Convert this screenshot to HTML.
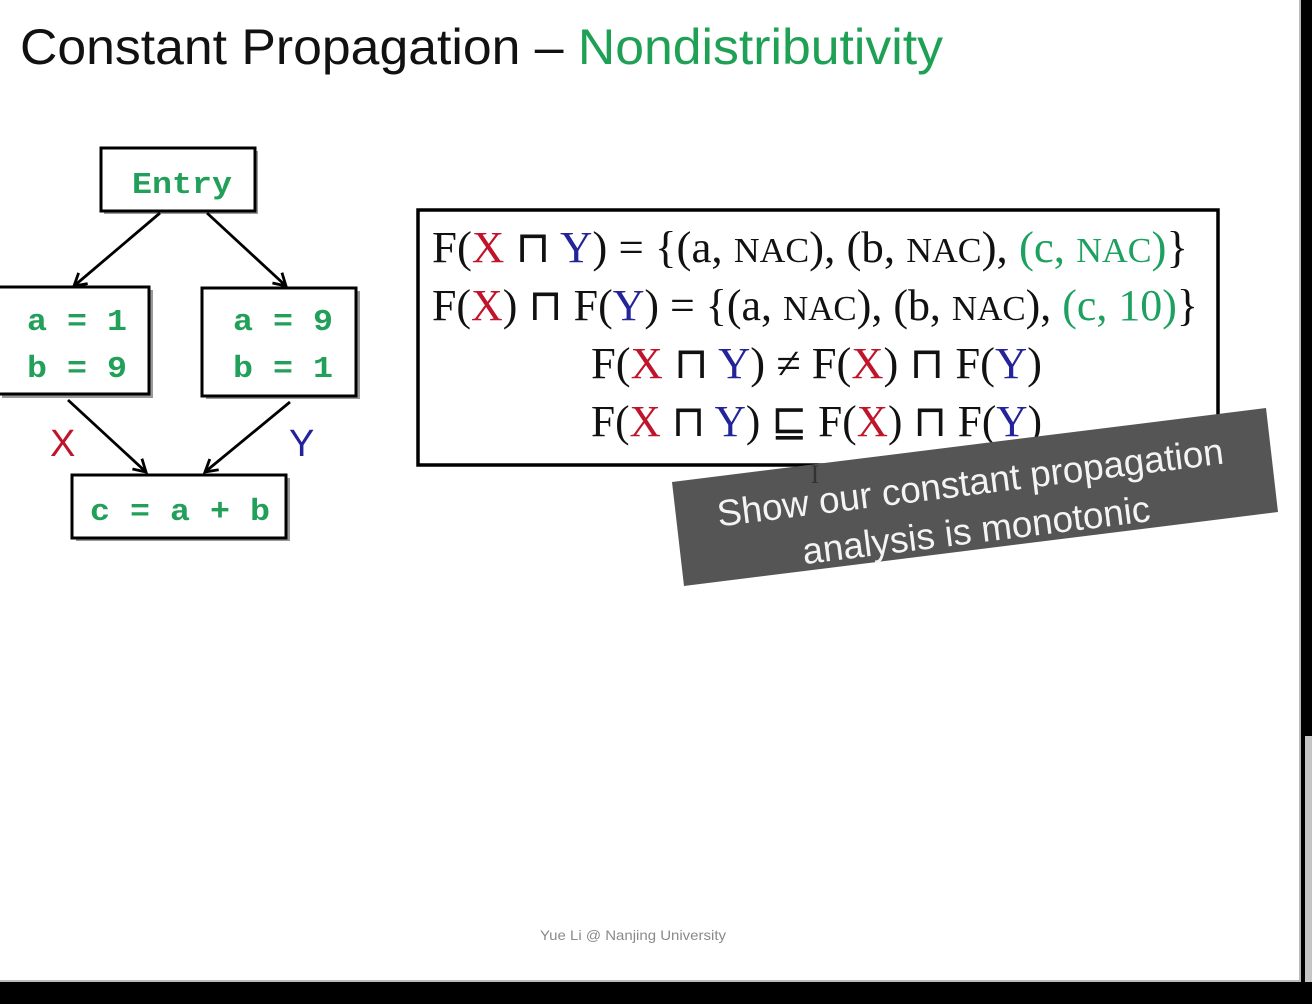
<!DOCTYPE html>
<html><head><meta charset="utf-8"><style>
html,body{margin:0;padding:0;width:1312px;height:1004px;overflow:hidden;background:#000}
svg{display:block}
</style></head><body>
<svg width="1312" height="1004" viewBox="0 0 1312 1004" xmlns="http://www.w3.org/2000/svg">
<defs>
<marker id="ah" markerWidth="18" markerHeight="18" refX="14" refY="9" orient="auto" markerUnits="userSpaceOnUse">
<path d="M2,2 L14,9 L2,16" fill="none" stroke="#000" stroke-width="2.8"/>
</marker>
</defs>
<rect x="0" y="0" width="1301" height="982" fill="#fff"/>
<rect x="1299" y="0" width="2" height="982" fill="#bbb"/>
<rect x="0" y="980" width="1301" height="2" fill="#bbb"/>
<rect x="1305" y="736" width="7" height="246" fill="#c4c4c4"/>

<text x="20" y="64" font-family="Liberation Sans, sans-serif" font-size="50" textLength="923" lengthAdjust="spacingAndGlyphs"><tspan fill="#111">Constant Propagation – </tspan><tspan fill="#1ea055">Nondistributivity</tspan></text>

<g stroke="#000" stroke-width="3" fill="#fff">
<rect x="104" y="151" width="154" height="63" fill="#999" stroke="none"/>
<rect x="101" y="148" width="154" height="63"/>
<rect x="2" y="290" width="151" height="108" fill="#999" stroke="none"/>
<rect x="-2" y="287" width="151" height="107"/>
<rect x="206" y="291" width="154" height="108" fill="#999" stroke="none"/>
<rect x="202" y="288" width="154" height="108"/>
<rect x="76" y="478" width="214" height="63" fill="#999" stroke="none"/>
<rect x="72" y="475" width="214" height="63"/>
</g>
<g stroke="#000" stroke-width="2.8" fill="none" marker-end="url(#ah)">
<line x1="160" y1="213" x2="74" y2="286"/>
<line x1="207" y1="213" x2="286" y2="286"/>
<line x1="68" y1="400" x2="146" y2="472"/>
<line x1="290" y1="402" x2="205" y2="472"/>
</g>
<g font-family="Liberation Mono, monospace" font-weight="bold" font-size="31" fill="#22a05a">
<text x="132" y="193" textLength="100" lengthAdjust="spacingAndGlyphs">Entry</text>
<text x="27" y="330" textLength="100" lengthAdjust="spacingAndGlyphs">a = 1</text>
<text x="27" y="377" textLength="100" lengthAdjust="spacingAndGlyphs">b = 9</text>
<text x="233" y="330" textLength="100" lengthAdjust="spacingAndGlyphs">a = 9</text>
<text x="233" y="377" textLength="100" lengthAdjust="spacingAndGlyphs">b = 1</text>
<text x="90" y="520" textLength="180" lengthAdjust="spacingAndGlyphs">c = a + b</text>
</g>
<text x="50" y="456" font-family="Liberation Sans, sans-serif" font-size="38" fill="#c0142a">X</text>
<text x="289" y="456" font-family="Liberation Sans, sans-serif" font-size="38" fill="#23239a">Y</text>

<rect x="418" y="210" width="800" height="255" fill="#fff" stroke="#000" stroke-width="3.5"/>
<g font-family="Liberation Serif, serif" font-size="44" fill="#111">
<text x="432" y="262" textLength="756" lengthAdjust="spacingAndGlyphs">F(<tspan fill="#c0142a">X</tspan> ⊓ <tspan fill="#23239a">Y</tspan>) = {(a, <tspan font-size="35">NAC</tspan>), (b, <tspan font-size="35">NAC</tspan>), <tspan fill="#1ea060">(c, <tspan font-size="35">NAC</tspan>)</tspan>}</text>
<text x="432" y="320" textLength="766" lengthAdjust="spacingAndGlyphs">F(<tspan fill="#c0142a">X</tspan>) ⊓ F(<tspan fill="#23239a">Y</tspan>) = {(a, <tspan font-size="35">NAC</tspan>), (b, <tspan font-size="35">NAC</tspan>), <tspan fill="#1ea060">(c, 10)</tspan>}</text>
<text x="591" y="378" textLength="451" lengthAdjust="spacingAndGlyphs">F(<tspan fill="#c0142a">X</tspan> ⊓ <tspan fill="#23239a">Y</tspan>) ≠ F(<tspan fill="#c0142a">X</tspan>) ⊓ F(<tspan fill="#23239a">Y</tspan>)</text>
<text x="591" y="436" textLength="451" lengthAdjust="spacingAndGlyphs">F(<tspan fill="#c0142a">X</tspan> ⊓ <tspan fill="#23239a">Y</tspan>) ⊑ F(<tspan fill="#c0142a">X</tspan>) ⊓ F(<tspan fill="#23239a">Y</tspan>)</text>
</g>

<polygon points="672,482 1266,408 1278,512 684,586" fill="#555"/>
<g transform="rotate(-7.1 972 497)" font-family="Liberation Sans, sans-serif" font-size="37" fill="#f4f4f4" text-anchor="middle">
<text x="972" y="495" textLength="510" lengthAdjust="spacingAndGlyphs">Show our constant propagation</text>
<text x="972" y="543" textLength="350" lengthAdjust="spacingAndGlyphs">analysis is monotonic</text>
</g>
<text x="815" y="483" font-family="Liberation Serif, serif" font-size="26" fill="#333" text-anchor="middle">I</text>

<text x="633" y="940" font-family="Liberation Sans, sans-serif" font-size="14" fill="#8a8a8a" text-anchor="middle" textLength="186" lengthAdjust="spacingAndGlyphs">Yue Li @ Nanjing University</text>
</svg>
</body></html>
